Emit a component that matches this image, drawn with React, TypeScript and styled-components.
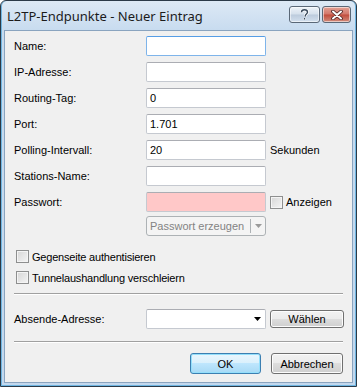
import React from 'react';
import styled, { createGlobalStyle } from 'styled-components';

const Global = createGlobalStyle`
  html, body { margin: 0; padding: 0; background: #fff; }
  body { font-family: "Liberation Sans", Arial, sans-serif; font-size: 11px; color: #000; }
`;

const Window = styled.div`
  width: 357px;
  height: 387px;
  box-sizing: border-box;
  border: 1px solid #2c3a48;
  border-radius: 6px 6px 0 0;
  background: linear-gradient(#dde9f5, #c7dbef 30px, #c3d8ee);
  padding: 0 3px 3px 3px;
  display: flex;
  flex-direction: column;
  box-shadow: inset 1px 0 0 #6fb6e2, inset -1px 0 0 #6fb6e2, inset 0 -1px 0 #6fb6e2;
`;

const TitleBar = styled.div`
  height: 29px;
  display: flex;
  align-items: flex-start;
  justify-content: space-between;
`;

const Title = styled.span`
  font-family: "Noto Sans", "Open Sans", sans-serif;
  font-size: 13px;
  color: #1b1b1b;
  margin: 6px 0 0 3px;
`;

const Caption = styled.div`
  display: flex;
  gap: 2px;
  margin: 5px 2px 0 0;
`;

const CapButton = styled.div<{ $close?: boolean }>`
  width: ${p => (p.$close ? 29 : 31)}px;
  height: 17px;
  box-sizing: border-box;
  border: 1px solid #5a6877;
  border-radius: 3px;
  display: flex;
  align-items: center;
  justify-content: center;
  background: ${p =>
    p.$close
      ? 'linear-gradient(#e3a295, #d2766a 48%, #c14c3c 52%, #d08b7c)'
      : 'linear-gradient(#eef3f8, #d5e0ec 48%, #bccbdc 52%, #d3e0ee)'};
  box-shadow: inset 0 0 0 1px rgba(255, 255, 255, 0.55);
`;

const Body = styled.div`
  flex: 1;
  background: #f0f0f0;
  border: 1px solid #8aa4bf;
  padding: 5px 9px 0 9px;
  display: flex;
  flex-direction: column;
`;

const Row = styled.div<{ $mt?: number }>`
  display: grid;
  grid-template-columns: 132px 120px auto;
  align-items: center;
  height: 20px;
  margin-top: ${p => p.$mt ?? 6}px;
`;

const Label = styled.span`
  color: #000;
`;

const Field = styled.div<{ $focus?: boolean; $pink?: boolean }>`
  height: 20px;
  box-sizing: border-box;
  border: 1px solid ${p => (p.$focus ? '#7eb4ea' : '#c5c9d0')};
  border-top-color: ${p => (p.$focus ? '#569de5' : '#abadb3')};
  border-radius: 2px;
  background: ${p => (p.$pink ? '#ffc8c8' : '#fff')};
  padding: 0 3px;
  display: flex;
  align-items: center;
`;

const After = styled.span`
  margin-left: 4px;
  display: flex;
  align-items: center;
  gap: 3px;
`;

const Check = styled.span`
  width: 13px;
  height: 13px;
  box-sizing: border-box;
  border: 1px solid #8e8f8f;
  background: linear-gradient(135deg, #d6d6d6, #f4f4f4);
  box-shadow: inset 0 0 0 1px #f4f4f4;
  display: inline-block;
`;

const SplitButton = styled.div`
  height: 20px;
  box-sizing: border-box;
  border: 1px solid #adb2b5;
  border-radius: 3px;
  background: #f4f4f4;
  color: #838383;
  display: flex;
  align-items: center;
`;

const SplitText = styled.span`
  flex: 1;
  padding-left: 3px;
`;

const SplitArrow = styled.span`
  width: 14px;
  height: 14px;
  border-left: 1px solid #adb2b5;
  display: flex;
  align-items: center;
  justify-content: center;
`;

const CheckRow = styled.label<{ $mt: number }>`
  display: flex;
  align-items: center;
  gap: 3px;
  margin: ${p => p.$mt}px 0 0 2px;
  height: 13px;
  letter-spacing: -0.2px;
`;

const Separator = styled.div<{ $mt: number }>`
  height: 0;
  border-top: 1px solid #a0a0a0;
  border-bottom: 1px solid #fff;
  margin-top: ${p => p.$mt}px;
`;

const Combo = styled(Field)`
  justify-content: flex-end;
  padding-right: 4px;
`;

const Button = styled.button<{ $default?: boolean; $w: number; $h: number }>`
  width: ${p => p.$w}px;
  height: ${p => p.$h}px;
  box-sizing: border-box;
  font: inherit;
  color: #000;
  border: 1px solid ${p => (p.$default ? '#3c7fb1' : '#707070')};
  border-radius: 3px;
  background: ${p =>
    p.$default
      ? 'linear-gradient(#eaf6fd, #d9f0fc 50%, #bee6fd 50%, #a7d9f5)'
      : 'linear-gradient(#f2f2f2, #ebebeb 50%, #dddddd 50%, #cfcfcf)'};
  box-shadow: inset 0 0 0 1px ${p => (p.$default ? '#94dffb' : '#fcfcfc')};
  padding: 0;
`;

const Footer = styled.div`
  display: flex;
  justify-content: flex-end;
  gap: 10px;
  margin-top: 10px;
`;

const Arrow = ({ color = '#000' }: { color?: string }) => (
  <svg width="7" height="4" viewBox="0 0 7 4">
    <path d="M0 0h7L3.5 4z" fill={color} />
  </svg>
);

const fields: { label: string; value?: string; focus?: boolean; after?: string }[] = [
  { label: 'Name:', focus: true },
  { label: 'IP-Adresse:' },
  { label: 'Routing-Tag:', value: '0' },
  { label: 'Port:', value: '1.701' },
  { label: 'Polling-Intervall:', value: '20', after: 'Sekunden' },
  { label: 'Stations-Name:' },
];

export default function App() {
  return (
    <>
      <Global />
      <Window>
        <TitleBar>
          <Title>L2TP-Endpunkte - Neuer Eintrag</Title>
          <Caption>
            <CapButton>
              <svg width="9" height="11" viewBox="0 0 9 11">
                <path
                  d="M1.5 3.2C1.5 1.6 2.8 0.8 4.5 0.8s3 0.9 3 2.4c0 1.6-2.2 1.9-2.2 3.6v0.6M4.5 9v1.4"
                  stroke="#fff"
                  strokeWidth="3"
                  fill="none"
                />
                <path
                  d="M1.5 3.2C1.5 1.6 2.8 0.8 4.5 0.8s3 0.9 3 2.4c0 1.6-2.2 1.9-2.2 3.6v0.6M4.5 9v1.4"
                  stroke="#3a4a5c"
                  strokeWidth="1.4"
                  fill="none"
                />
              </svg>
            </CapButton>
            <CapButton $close>
              <svg width="12" height="10" viewBox="0 0 12 10">
                <path d="M2 1.5l8 7M10 1.5l-8 7" stroke="#4a2020" strokeWidth="3.6" strokeLinecap="round" />
                <path d="M2 1.5l8 7M10 1.5l-8 7" stroke="#fff" strokeWidth="2" strokeLinecap="round" />
              </svg>
            </CapButton>
          </Caption>
        </TitleBar>
        <Body>
          {fields.map((f, i) => (
            <Row key={f.label} $mt={i === 0 ? 0 : 6}>
              <Label>{f.label}</Label>
              <Field $focus={f.focus}>{f.value}</Field>
              {f.after && <After>{f.after}</After>}
            </Row>
          ))}
          <Row>
            <Label>Passwort:</Label>
            <Field $pink />
            <After>
              <Check />
              Anzeigen
            </After>
          </Row>
          <Row $mt={4}>
            <span />
            <SplitButton>
              <SplitText>Passwort erzeugen</SplitText>
              <SplitArrow>
                <Arrow color="#9a9a9a" />
              </SplitArrow>
            </SplitButton>
          </Row>
          <CheckRow $mt={14}>
            <Check />
            Gegenseite authentisieren
          </CheckRow>
          <CheckRow $mt={8}>
            <Check />
            Tunnelaushandlung verschleiern
          </CheckRow>
          <Separator $mt={9} />
          <Row $mt={14}>
            <Label>Absende-Adresse:</Label>
            <Combo>
              <Arrow />
            </Combo>
            <After>
              <Button $w={74} $h={18}>Wählen</Button>
            </After>
          </Row>
          <Separator $mt={12} />
          <Footer>
            <Button $default $w={71} $h={21}>OK</Button>
            <Button $w={72} $h={21}>Abbrechen</Button>
          </Footer>
        </Body>
      </Window>
    </>
  );
}
